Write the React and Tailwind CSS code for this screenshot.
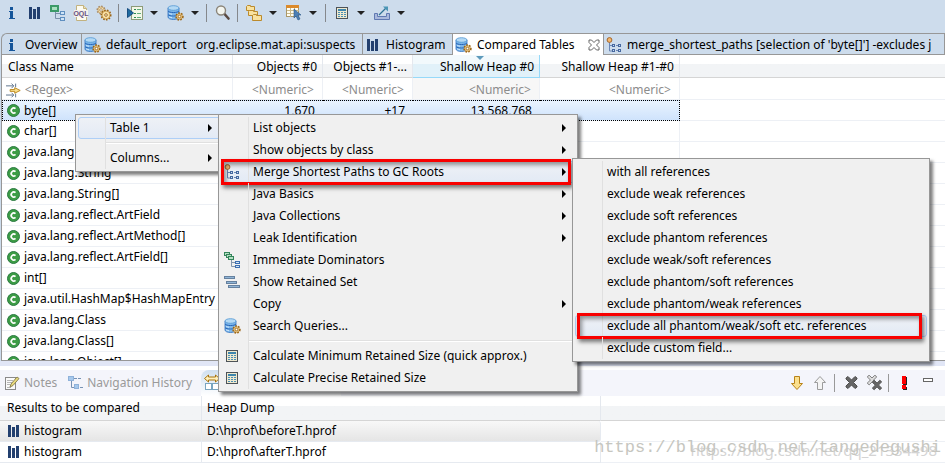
/**
 * Memory Analyzer - compared tables view with the query context menu open
 */

import { useState } from 'react';

const InfoIcon = () => (
  <svg width="16" height="16" viewBox="0 0 16 16" fill="#15559a">
    <rect x="6" y="2" width="3" height="3" />
    <path d="M5 6h4v7h2v1H5v-1h1V7H5z" />
  </svg>
);

const HistogramIcon = () => (
  <svg width="16" height="16" viewBox="0 0 16 16" fill="#23406f">
    <rect x="2" y="2" width="3" height="12" />
    <rect x="6" y="4" width="3" height="10" />
    <rect x="10" y="2" width="3" height="12" />
  </svg>
);

const TreeIcon = () => (
  <svg width="16" height="16" viewBox="0 0 16 16" fill="none">
    <rect x="1" y="1" width="7" height="5" fill="#a9e0c0" stroke="#3c9a68" strokeWidth="2" />
    <path d="M5.500 7v6.500H10M5.500 8.500H10" stroke="#7b8fa8" />
    <rect x="10.500" y="6.500" width="4" height="3" fill="#cfe4f7" stroke="#5f8fc0" />
    <rect x="10.500" y="12.500" width="4" height="3" fill="#cfe4f7" stroke="#5f8fc0" />
  </svg>
);

const OqlIcon = () => (
  <svg width="16" height="16" viewBox="0 0 16 16">
    <path d="M3.500 .5h7l3 3v12h-10z" fill="#fdfbf0" stroke="#c2b280" />
    <path d="M10.500 .5v3h3" fill="#efe2b0" stroke="#c2b280" />
    <rect x="1" y="5" width="14" height="7" fill="#f4f1ea" />
    <text x="8" y="11" textAnchor="middle" fontSize="7" fontWeight="bold" fill="#665082" fontFamily="Liberation Sans">OQL</text>
  </svg>
);

const Gear = ({ cx, cy, r, color = '#9b6416' }) => (
  <g>
    <circle cx={cx} cy={cy} r={r} fill="#f7d58c" stroke={color} strokeWidth="2" strokeDasharray="1.500 1.200" />
    <circle cx={cx} cy={cy} r={r - 0.5} fill="#f9dfa2" stroke={color} strokeWidth="0.500" />
    <circle cx={cx} cy={cy} r="1.300" fill="#fff" stroke={color} strokeWidth="0.900" />
  </g>
);

const GearsIcon = () => (
  <svg width="16" height="16" viewBox="0 0 16 16">
    <Gear cx={5} cy={5} r={3.5} color="#a98c68" />
    <Gear cx={10} cy={10} r={4.5} />
  </svg>
);

const RunIcon = () => (
  <svg width="16" height="16" viewBox="0 0 16 16" fill="none">
    <rect x="4.500" y="1.500" width="11" height="13" fill="#f4f8e8" stroke="#8d9b79" />
    <path d="M7 4.500h2M7 8.500h2M7 12.500h2" stroke="#2d8a4e" />
    <path d="M10 4.500h4M10 8.500h4M10 12.500h4" stroke="#5fae7c" />
    <path d="M.5 3.500v9l6-4.500z" fill="#1d6aa0" stroke="#174d80" />
  </svg>
);

const DatabaseIcon = () => (
  <svg width="17" height="16" viewBox="0 0 17 16">
    <path d="M1 3v9c0 1.500 2.500 2.500 5.500 2.500S12 13.500 12 12V3z" fill="#7db8ec" stroke="#2f70bf" strokeWidth="0.800" />
    <path d="M1 6c1 2 10 2 11 0M1 9.500c1 2 10 2 11 0" fill="none" stroke="#2563b5" />
    <path d="M2 8c.5.700 1.500 1 3 1.200M2 11.500c.5.700 1.500 1 3 1.200" fill="none" stroke="#d2e8fb" />
    <ellipse cx="6.500" cy="3" rx="5.500" ry="2.300" fill="#b4d9f4" stroke="#4f95d3" strokeWidth="0.800" />
    <Gear cx={12.5} cy={11.5} r={3.2} />
  </svg>
);

const SearchIcon = () => (
  <svg width="16" height="16" viewBox="0 0 16 16">
    <path d="M9.500 9l4 4.500" stroke="#5a4a42" strokeWidth="2.600" strokeLinecap="round" />
    <circle cx="6" cy="5.500" r="4.500" fill="#f3f5ef" stroke="#8b8579" strokeWidth="1.400" />
  </svg>
);

const FoldersIcon = () => (
  <svg width="16" height="16" viewBox="0 0 16 16" fill="#f9e2a0" stroke="#bb8a2c">
    <path d="M.5 1.500v4h8v-4h-4v-1h-3z" />
    <path d="M2.500 6.500v4h9v-4h-4v-1h-4z" />
    <path d="M6.500 10.500v5h9v-5h-5v-1h-3z" />
  </svg>
);

const GridCursorIcon = () => (
  <svg width="16" height="16" viewBox="0 0 16 16">
    <rect x="0.500" y="0.500" width="12" height="11" fill="#fffdf0" stroke="#ab9768" />
    <rect x="0" y="0" width="13" height="3" fill="#dc8a2a" />
    <path d="M4.500 3v9M8.500 3v9M1 5.500h12M1 8.500h12" stroke="#c9b98b" />
    <path d="M8 4v9l2-2 2 4 2-1-2-4h3z" fill="#4c7fb5" stroke="#285888" strokeWidth="0.600" />
  </svg>
);

const CalculatorIcon = () => (
  <svg width="16" height="16" viewBox="0 0 16 16">
    <rect x="2" y="2" width="12" height="12" fill="#4d5358" />
    <rect x="3" y="3" width="10" height="10" fill="#efe9cf" />
    <rect x="4" y="4" width="8" height="2" fill="#3e86ad" />
    <path d="M4 7.500h8M4 9.500h8M4 11.500h8" stroke="#4a8fb3" strokeDasharray="2 1" />
  </svg>
);

const ExportIcon = () => (
  <svg width="16" height="16" viewBox="0 0 16 16" fill="none">
    <path d="M.5 8.500h3v3h9v-3h3v6H.5z" fill="#aab9dc" stroke="#6079b2" />
    <path d="M5 10l7-7" stroke="#2f7295" strokeWidth="1.300" />
    <path d="M9 1.500h5v5z" fill="#4a96b5" />
  </svg>
);

const PathsIcon = () => (
  <svg width="16" height="16" viewBox="0 0 16 16" fill="none">
    <path d="M3.500 5v9H8M3.500 8.500H8M10 8.500h3M10 13.500h3" stroke="#6a86b5" />
    <circle cx="3.500" cy="3" r="2.400" fill="#f3b870" stroke="#a3652b" />
    <g fill="#cbdcf3" stroke="#46689f">
      <rect x="6.500" y="7.500" width="2" height="2" />
      <rect x="12.500" y="7.500" width="2" height="2" />
      <rect x="6.500" y="12.500" width="2" height="2" />
      <rect x="12.500" y="12.500" width="2" height="2" />
    </g>
  </svg>
);

const DominatorsIcon = () => (
  <svg width="17" height="16" viewBox="0 0 17 16" fill="none">
    <g fill="#b4dfc2" stroke="#33845a">
      <rect x="0.500" y="0.500" width="5" height="3" />
      <rect x="2.500" y="2.500" width="5" height="3" />
      <rect x="4.500" y="4.500" width="5" height="3" />
    </g>
    <path d="M7.500 8v6.500H12M7.500 10.500H12" stroke="#8496ab" />
    <g fill="#cfe4f7" stroke="#3f6fb0">
      <rect x="11.500" y="9.500" width="4" height="2" />
      <rect x="11.500" y="13.500" width="4" height="2" />
    </g>
  </svg>
);

const RetainedIcon = () => (
  <svg width="16" height="16" viewBox="0 0 16 16" fill="#8fb4d6" stroke="#66819f">
    <rect x="0.500" y="2.500" width="10" height="2" />
    <rect x="2.500" y="7.500" width="10" height="2" />
    <rect x="4.500" y="11.500" width="11" height="2" />
  </svg>
);

const FilterIcon = () => (
  <svg width="16" height="16" viewBox="0 0 16 16" fill="none">
    <path d="M0 3.500h8M6 1l2.500 2.500L6 6M10.500 1v4M0 13.500h8M6 11l2.500 2.500L6 16M10.500 12v4" stroke="#536b86" />
    <path d="M4.500 7.500h5v-2l6 3-6 3v-2h-5z" fill="#fbe08d" stroke="#b88318" />
  </svg>
);

const ClassIcon = () => (
  <svg width="13" height="13" viewBox="0 0 13 13">
    <circle cx="6.500" cy="6.500" r="6" fill="#3c9c45" stroke="#2b7a42" />
    <path d="M8.500 4.700A2.500 2.500 0 1 0 8.500 8.300" fill="none" stroke="#fff" strokeWidth="1.700" />
  </svg>
);

const NotesIcon = () => (
  <svg width="16" height="16" viewBox="0 0 16 16" fill="none">
    <rect x="1.500" y="2.500" width="10" height="12" fill="#fafafa" stroke="#8a8a8a" />
    <path d="M3 5.500h6M3 7.500h5M3 9.500h3M3 12.500h4" stroke="#b5b5b5" />
    <path d="M6 12l1-3 6-7 2 1.500-6 7z" fill="#eadb7d" stroke="#8c8353" />
  </svg>
);

const HistoryIcon = () => (
  <svg width="16" height="16" viewBox="0 0 16 16" fill="none">
    <path d="M4.500 6v6.500H8M7 3.500h3M11 3.500h3M13 12.500h3" stroke="#7893b4" />
    <rect x="1.500" y="1.500" width="5" height="4" fill="#a7c9ec" stroke="#8fb2da" />
    <rect x="7.500" y="9.500" width="4" height="4" fill="#a7c9ec" stroke="#8fb2da" />
  </svg>
);

const CompareIcon = () => (
  <svg width="16" height="16" viewBox="0 0 16 16" fill="none">
    <path d="M.5 4.500l4-3.500v2h7V1l4 3.500-4 3.500V6h-7v2z" fill="#fff0bd" stroke="#a9740f" />
    <rect x="1.500" y="9.500" width="6" height="6" fill="#fff" stroke="#79a5c0" />
    <rect x="8.500" y="9.500" width="6" height="6" fill="#fff" stroke="#79a5c0" />
  </svg>
);

const CloseIcon = () => (
  <svg width="12" height="12" viewBox="0 0 12 12" fill="#fff" stroke="#555" strokeWidth="0.900">
    <path d="M1 1h2.500L6 3.500 8.500 1H11v2.500L8.500 6 11 8.500V11H8.500L6 8.500 3.500 11H1V8.500L3.500 6 1 3.500z" />
  </svg>
);

const ArrowIcon = ({ up }) => (
  <svg width="14" height="16" viewBox="0 0 14 16">
    {up ? (
      <path d="M7 1.500l5.500 6H9.500v7h-5v-7h-3z" fill="#f4f4f4" stroke="#9c9c9c" />
    ) : (
      <path d="M7 14.500l5.500-6H9.500v-7h-5v7h-3z" fill="#fbe08d" stroke="#b88318" />
    )}
  </svg>
);

const crossPath = 'M2 3l2-1.500L7.500 5 11 1.500 13 3v1L9.500 7.500 13 11v1l-2 1.500L7.500 10 4 13.500 2 12v-1l3.500-3.500L2 4z';

const RemoveIcon = () => (
  <svg width="16" height="16" viewBox="0 0 16 16">
    <path d={crossPath} fill="#666" stroke="#505050" />
  </svg>
);

const RemoveAllIcon = () => (
  <svg width="17" height="16" viewBox="0 0 17 16">
    <path d={crossPath} transform="translate(-1 -1) scale(.8)" fill="#ddd" stroke="#666" />
    <path d={crossPath} transform="translate(4 4) scale(.8)" fill="#666" stroke="#505050" />
  </svg>
);

const ErrorIcon = () => (
  <svg width="8" height="14" viewBox="0 0 8 14">
    <path d="M2 1h4v8H2zM2 11h4v3H2z" fill="#222" />
    <path d="M1 0h4v8H1zM1 9h4v4H1z" fill="#f00" />
  </svg>
);

const toolGroups = [
  [
    { name: 'Overview', icon: <InfoIcon /> },
    { name: 'Create histogram', icon: <HistogramIcon /> },
    { name: 'Dominator tree', icon: <TreeIcon /> },
    { name: 'Open query editor', icon: <OqlIcon /> },
    { name: 'Thread overview', icon: <GearsIcon /> },
  ],
  [
    { name: 'Run expert system test', icon: <RunIcon />, menu: true },
    { name: 'Open query browser', icon: <DatabaseIcon />, menu: true },
  ],
  [{ name: 'Find object', icon: <SearchIcon /> }],
  [
    { name: 'Group result', icon: <FoldersIcon />, menu: true },
    { name: 'Select columns', icon: <GridCursorIcon />, menu: true },
  ],
  [
    { name: 'Calculate retained size', icon: <CalculatorIcon />, menu: true },
    { name: 'Export', icon: <ExportIcon />, menu: true },
  ],
];

const tabs = [
  { name: 'Overview', icon: <InfoIcon />, width: 'w-[80px]' },
  { name: 'default_report   org.eclipse.mat.api:suspects', icon: <DatabaseIcon />, width: 'w-[281px]' },
  { name: 'Histogram', icon: <HistogramIcon />, width: 'w-[90px]' },
  { name: 'Compared Tables', icon: <DatabaseIcon />, width: 'w-[151px]' },
  { name: "merge_shortest_paths [selection of 'byte[]'] -excludes j", icon: <PathsIcon />, width: 'flex-1' },
];

const columns = ['Objects #0', 'Objects #1-...', 'Shallow Heap #0', 'Shallow Heap #1-#0'];

const classes = [
  { name: 'byte[]', values: ['1,670', '+17', '13,568,768', ''] },
  { name: 'char[]' },
  { name: 'java.lang.String' },
  { name: 'java.lang.String' },
  { name: 'java.lang.String[]' },
  { name: 'java.lang.reflect.ArtField' },
  { name: 'java.lang.reflect.ArtMethod[]' },
  { name: 'java.lang.reflect.ArtField[]' },
  { name: 'int[]' },
  { name: 'java.util.HashMap$HashMapEntry' },
  { name: 'java.lang.Class' },
  { name: 'java.lang.Class[]' },
  { name: 'java.lang.Object[]' },
];

const tableMenu = [
  { name: 'Table 1', sub: true, active: true },
  { divider: true },
  { name: 'Columns...', sub: true },
];

const queryMenu = [
  { name: 'List objects', sub: true },
  { name: 'Show objects by class', sub: true },
  { name: 'Merge Shortest Paths to GC Roots', sub: true, icon: <PathsIcon />, active: true, mark: 'left-0 right-1' },
  { name: 'Java Basics', sub: true },
  { name: 'Java Collections', sub: true },
  { name: 'Leak Identification', sub: true },
  { name: 'Immediate Dominators', icon: <DominatorsIcon /> },
  { name: 'Show Retained Set', icon: <RetainedIcon /> },
  { name: 'Copy', sub: true },
  { name: 'Search Queries...', icon: <DatabaseIcon /> },
  { divider: true },
  { name: 'Calculate Minimum Retained Size (quick approx.)', icon: <CalculatorIcon /> },
  { name: 'Calculate Precise Retained Size', icon: <CalculatorIcon /> },
];

const referenceMenu = [
  { name: 'with all references' },
  { name: 'exclude weak references' },
  { name: 'exclude soft references' },
  { name: 'exclude phantom references' },
  { name: 'exclude weak/soft references' },
  { name: 'exclude phantom/soft references' },
  { name: 'exclude phantom/weak references' },
  { name: 'exclude all phantom/weak/soft etc. references', active: true, mark: 'left-[2px] right-[5px]' },
  { name: 'exclude custom field...' },
];

const Menu = ({ items, className }) => (
  <ul className={`absolute border border-[#979797] bg-[#f0f0f0] p-[2px] shadow-[3px_3px_3px_rgba(0,0,0,0.5)] ${className}`}>
    {items.map((item, i) =>
      item.divider ? (
        <li key={i} className="flex h-2">
          <span className="w-7 border-r border-[#e0e0e0]" />
          <span className="mt-[3px] h-[2px] flex-1 border-t border-[#e0e0e0] bg-white" />
        </li>
      ) : (
        <li key={i} className="relative">
          <button
            type="button"
            className={`flex h-[22px] w-full items-center border text-left ${item.active ? 'rounded-[3px] border-[#aecff7] bg-linear-to-b from-[#eef1f6] to-[#e3eaf5]' : 'border-transparent'}`}
          >
            <span className="flex h-[22px] w-[27px] shrink-0 items-center border-r border-[#e0e0e0] pl-[2px]">{item.icon}</span>
            <span className="flex-1 whitespace-nowrap pl-1">{item.name}</span>
            {item.sub && <span className="mr-2 border-y-4 border-l-4 border-y-transparent border-l-black" />}
          </button>
          {item.mark && (
            <span className={`pointer-events-none absolute -inset-y-[2px] border-3 border-[#f80000] shadow-[2px_3px_4px_rgba(0,0,0,0.5),inset_2px_3px_4px_rgba(0,0,0,0.4)] ${item.mark}`} />
          )}
        </li>
      )
    )}
  </ul>
);

const Toolbar = () => (
  <div className="flex h-[33px] shrink-0 pt-px">
    {toolGroups.map((group, i) => (
      <div key={i} className="flex h-6 items-center">
        {i > 0 && <span className="ml-[3px] mr-1 h-[18px] w-px bg-[#85888c]" />}
        {group.map((tool) => (
          <button
            key={tool.name}
            type="button"
            aria-label={tool.name}
            className={`flex h-6 items-center ${tool.menu ? 'w-10 gap-[7px] pl-1' : 'w-[23px] justify-center'}`}
          >
            {tool.icon}
            {tool.menu && <span className="border-x-4 border-t-4 border-x-transparent border-t-[#222]" />}
          </button>
        ))}
      </div>
    ))}
  </div>
);

const ClassTable = ({ selected, onSelect }) => (
  <table className="w-full table-fixed border-separate border-spacing-0 bg-white">
    <colgroup>
      <col className="w-[231px]" />
      <col className="w-[90px]" />
      <col className="w-[90px]" />
      <col className="w-[127px]" />
      <col className="w-[140px]" />
      <col />
    </colgroup>
    <thead>
      <tr className="h-[23px]">
        <th className="border-b border-r border-b-[#d5d5d5] border-r-[#e4e8ee] bg-linear-to-b from-white from-40% to-[#f2f4f6] to-40% p-0 pl-[6px] pt-[2px] text-left font-normal">
          Class Name
        </th>
        {columns.map((col, i) => (
          <th
            key={col}
            className={`relative whitespace-nowrap border-b border-r p-0 pr-[5px] pt-[2px] text-right font-normal ${i === 2 ? 'border-[#96d9f9] bg-linear-to-b from-[#f2f9fc] from-40% to-[#e1f1f9] to-40%' : 'border-b-[#d5d5d5] border-r-[#e4e8ee] bg-linear-to-b from-white from-40% to-[#f2f4f6] to-40%'}`}
          >
            {i === 2 && <span className="absolute left-1/2 top-px border-x-4 border-t-4 border-x-transparent border-t-[#5d9abb]" />}
            {col}
          </th>
        ))}
        <th className="border-b border-[#d5d5d5] bg-linear-to-b from-white from-40% to-[#f2f4f6] to-40% p-0" />
      </tr>
    </thead>
    <tbody>
      <tr className="h-[22px]">
        <td className="border-b border-r border-[#edf0f5] p-0 pl-1 pt-[2px]">
          <label className="flex items-center gap-1">
            <FilterIcon />
            <input aria-label="Class name filter" placeholder="<Regex>" className="w-full outline-none placeholder:text-[#8c8c8c]" />
          </label>
        </td>
        {columns.map((col, i) => (
          <td key={col} className={`border-b border-r border-[#edf0f5] p-0 pr-2 pt-[2px] ${i === 2 ? 'bg-[#f7f7f7]' : ''}`}>
            <input aria-label={`${col} filter`} placeholder="<Numeric>" className="block w-full text-right outline-none placeholder:text-[#8c8c8c]" />
          </td>
        ))}
        <td className="border-b border-[#edf0f5] p-0" />
      </tr>
      {classes.map((row, i) => (
        <tr key={i} className="h-[21px]" onClick={() => onSelect(i)}>
          <td
            className={`border-b p-0 ${i === selected ? 'border-l border-t border-dotted border-black bg-linear-to-b from-[#e9f3fe] to-[#cfe3fc] pl-1' : 'border-r border-[#edf0f5] pl-[5px]'}`}
          >
            <span className="flex items-center gap-1 overflow-hidden whitespace-nowrap">
              <span className="shrink-0"><ClassIcon /></span>
              {row.name}
            </span>
          </td>
          {columns.map((col, c) => (
            <td
              key={col}
              className={`border-b p-0 pr-2 text-right ${i === selected ? 'border-t border-dotted border-black bg-linear-to-b from-[#e9f3fe] to-[#cfe3fc]' : 'border-r border-[#edf0f5]'} ${c === 3 ? 'border-r' : ''}`}
            >
              {row.values?.[c]}
            </td>
          ))}
          <td className="border-b border-[#edf0f5] p-0" />
        </tr>
      ))}
    </tbody>
  </table>
);

const CompareBasket = () => (
  <section className="relative shrink-0 bg-[#e1e6f6] pt-[5px]">
    <div className="flex h-[30px] items-end border-t-4 border-white bg-[#f4f5fb] text-[#9a9a9a]">
      <button type="button" className="flex h-[26px] items-center gap-1 pl-1">
        <NotesIcon />
        Notes
      </button>
      <button type="button" className="ml-[10px] flex h-[26px] w-[134px] items-center gap-1 whitespace-nowrap">
        <HistoryIcon />
        Navigation History
      </button>
      <button type="button" aria-label="Compare Basket" className="flex h-[26px] w-[140px] rounded-t-lg bg-linear-to-b from-[#cfdff0] to-white pl-[3px] pt-1">
        <CompareIcon />
      </button>
      <div className="ml-auto flex h-[26px] items-center pr-3">
        <button type="button" aria-label="Move down" className="w-[23px]"><ArrowIcon /></button>
        <button type="button" aria-label="Move up" className="w-[21px]"><ArrowIcon up /></button>
        <span className="mr-[9px] h-[18px] w-px bg-[#999]" />
        <button type="button" aria-label="Remove" className="w-[23px]"><RemoveIcon /></button>
        <button type="button" aria-label="Remove all" className="w-[21px]"><RemoveAllIcon /></button>
        <span className="mr-3 h-[18px] w-px bg-[#999]" />
        <button type="button" aria-label="Compare" className="w-[22px]"><ErrorIcon /></button>
        <button type="button" aria-label="Minimize" className="mb-[6px] h-1 w-[10px] border border-[#666] bg-white" />
      </div>
    </div>
    <div className="bg-white pb-[5px]">
      <table className="w-full table-fixed border-separate border-spacing-0">
        <colgroup>
          <col className="w-[202px]" />
          <col className="w-[399px]" />
          <col />
        </colgroup>
        <thead>
          <tr className="h-[25px] bg-linear-to-b from-white from-40% to-[#f2f4f6] to-40% text-left">
            <th className="border-b border-r border-b-[#d5d5d5] border-r-[#e4e8ee] p-0 pl-[7px] font-normal">Results to be compared</th>
            <th className="border-b border-r border-b-[#d5d5d5] border-r-[#e4e8ee] p-0 pl-[5px] font-normal">Heap Dump</th>
            <th className="border-b border-[#d5d5d5] p-0" />
          </tr>
        </thead>
        <tbody>
          {['D:\\hprof\\beforeT.hprof', 'D:\\hprof\\afterT.hprof'].map((path, i) => (
            <tr key={path} className="h-[21px]">
              <td className={`border-b border-r border-[#e6eaf0] p-0 pl-[6px] ${i === 0 ? 'bg-linear-to-b from-[#f8f8f8] to-[#e5e5e5]' : ''}`}>
                <span className="flex items-center gap-[2px]">
                  <HistogramIcon />
                  histogram
                </span>
              </td>
              <td className={`border-b border-r border-[#e6eaf0] p-0 pl-[5px] ${i === 0 ? 'rounded-r-[3px] bg-linear-to-b from-[#f8f8f8] to-[#e5e5e5]' : ''}`}>{path}</td>
              <td className="border-b border-[#edf0f5] p-0" />
            </tr>
          ))}
        </tbody>
      </table>
    </div>
    <span className="absolute bottom-2 right-2 whitespace-nowrap text-[15px] leading-5 text-[#d4d4d4]">
      https://blog.csdn.net/qq_21334498
    </span>
    <span className="absolute bottom-2 right-1 whitespace-nowrap font-['Liberation_Mono',monospace] text-[17px] leading-6 text-[#c6c6c0]">
      https://blog.csdn.net/tangedegushi
    </span>
  </section>
);

const App = () => {
  const [activeTab, setActiveTab] = useState(3);
  const [selected, setSelected] = useState(0);

  return (
    <div className="relative flex h-screen flex-col overflow-hidden bg-[#cddcec] font-['Noto_Sans','Noto_Sans_CJK_SC',sans-serif] text-[12px] leading-4 text-black">
      <Toolbar />
      <main className="ml-px flex min-h-0 flex-1 flex-col overflow-hidden rounded-tl-md border-b border-l border-t border-[#979797]">
        <div className="flex h-[21px] shrink-0">
          {tabs.map((tab, i) => (
            <button
              key={tab.name}
              type="button"
              onClick={() => setActiveTab(i)}
              className={`flex min-w-0 items-center gap-[5px] overflow-hidden whitespace-pre border-r border-[#979797] pl-[2px] pt-px ${tab.width} ${tab.width === 'flex-1' ? '' : 'shrink-0'} ${i === activeTab ? 'bg-white' : 'border-b'}`}
            >
              <span className="shrink-0">{tab.icon}</span>
              {tab.name}
              {i === activeTab && <span className="ml-2"><CloseIcon /></span>}
            </button>
          ))}
        </div>
        <div className="min-h-0 flex-1 overflow-hidden bg-white">
          <ClassTable selected={selected} onSelect={setSelected} />
        </div>
      </main>
      <CompareBasket />

      <Menu items={tableMenu} className="left-[75px] top-[114px] w-[149px]" />
      <Menu items={queryMenu} className="left-[218px] top-[114px] w-[360px]" />
      <Menu items={referenceMenu} className="left-[572px] top-[158px] w-[358px]" />
    </div>
  );
};

export default App;
